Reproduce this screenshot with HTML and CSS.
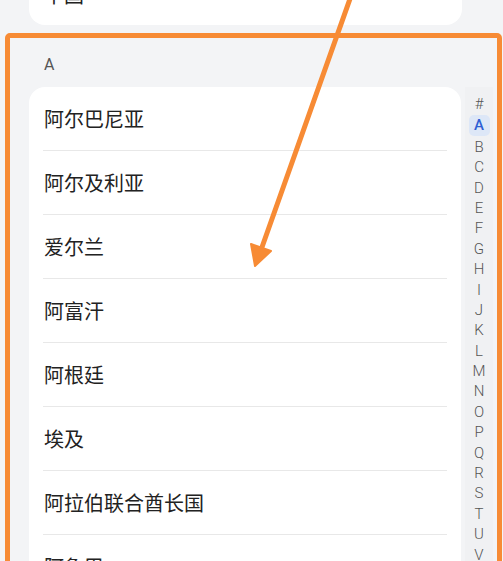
FILE: index.html
```html
<!DOCTYPE html>
<html lang="zh-CN">
<head>
    <meta charset="UTF-8">
    <meta name="viewport" content="width=device-width, initial-scale=1.0">
    <title>选择国家/地区</title>
    <link rel="stylesheet" href="styles.css">
</head>
<body>
    <div class="page">
        <!-- 当前选择 -->
        <div class="current-card">
            <span class="country">中国</span>
            <svg class="check" width="18" height="14" viewBox="0 0 18 14"><path d="M2 7 L7 12 L16 2" fill="none" stroke="#333" stroke-width="2"/></svg>
        </div>

        <div class="section-title">A</div>

        <div class="list-area">
            <ul class="country-list">
                <li>阿尔巴尼亚</li>
                <li>阿尔及利亚</li>
                <li>爱尔兰</li>
                <li>阿富汗</li>
                <li>阿根廷</li>
                <li>埃及</li>
                <li>阿拉伯联合酋长国</li>
                <li>阿鲁巴</li>
            </ul>

            <nav class="index-bar">
                <span>#</span>
                <span class="active">A</span>
                <span>B</span>
                <span>C</span>
                <span>D</span>
                <span>E</span>
                <span>F</span>
                <span>G</span>
                <span>H</span>
                <span>I</span>
                <span>J</span>
                <span>K</span>
                <span>L</span>
                <span>M</span>
                <span>N</span>
                <span>O</span>
                <span>P</span>
                <span>Q</span>
                <span>R</span>
                <span>S</span>
                <span>T</span>
                <span>U</span>
                <span>V</span>
                <span>W</span>
            </nav>
        </div>
    </div>

    <!-- Markierung -->
    <div class="highlight-box"></div>
    <svg class="arrow" width="503" height="561" viewBox="0 0 503 561">
        <line x1="351" y1="-4" x2="261" y2="250" stroke="#f78b35" stroke-width="5" stroke-linecap="round"/>
        <polygon points="255,266 251,244 271,251" fill="#f78b35" stroke="#f78b35" stroke-width="2" stroke-linejoin="round"/>
    </svg>
</body>
</html>
```

FILE: styles.css
```css
body {
    margin: 0;
    background-color: #f3f4f6;
    font-family: "Noto Sans CJK SC", "Noto Sans", sans-serif;
    color: #222;
    overflow: hidden;
}
.page {
    padding-left: 29px;
}
.current-card {
    margin-top: -29px;
    width: 433px;
    height: 54px;
    background: #fff;
    border-radius: 16px;
    display: flex;
    align-items: center;
    justify-content: space-between;
    padding: 0 26px 0 15px;
    box-sizing: border-box;
    font-size: 20px;
}
.current-card .country {
    position: relative;
    top: -4px;
}
.check {
    position: relative;
    top: -12px;
}
.section-title {
    height: 62px;
    line-height: 62px;
    padding-left: 15px;
    padding-top: 9px;
    box-sizing: border-box;
    font-family: Roboto, "Noto Sans", sans-serif;
    font-size: 16px;
    color: #555;
}
.list-area {
    display: flex;
    align-items: flex-start;
}
.country-list {
    list-style: none;
    margin: 0;
    padding: 0 14px;
    width: 432px;
    box-sizing: border-box;
    background: #fff;
    border-radius: 16px 16px 0 0;
}
.country-list li {
    height: 64px;
    line-height: 63px;
    padding-left: 1px;
    font-size: 20px;
    border-bottom: 1px solid #e8e8e8;
    box-sizing: border-box;
}
.index-bar {
    display: flex;
    flex-direction: column;
    align-items: center;
    width: 28px;
    margin-left: 4px;
    padding-top: 7px;
    background: #f0f1f3;
    font-family: Roboto, "Noto Sans", sans-serif;
    font-size: 15px;
    font-weight: 300;
    color: #555;
}
.index-bar span {
    width: 21px;
    height: 20.4px;
    line-height: 21px;
    text-align: center;
    border-radius: 5px;
}
.index-bar span.active {
    margin: 1px 0;
    background: #dde7f7;
    color: #2f5fd4;
    font-weight: 500;
}
.highlight-box {
    position: absolute;
    left: 5px;
    top: 33px;
    width: 497px;
    height: 560px;
    border: 5px solid #f78b35;
    border-radius: 5px;
    box-sizing: border-box;
}
.arrow {
    position: absolute;
    left: 0;
    top: 0;
}
```
